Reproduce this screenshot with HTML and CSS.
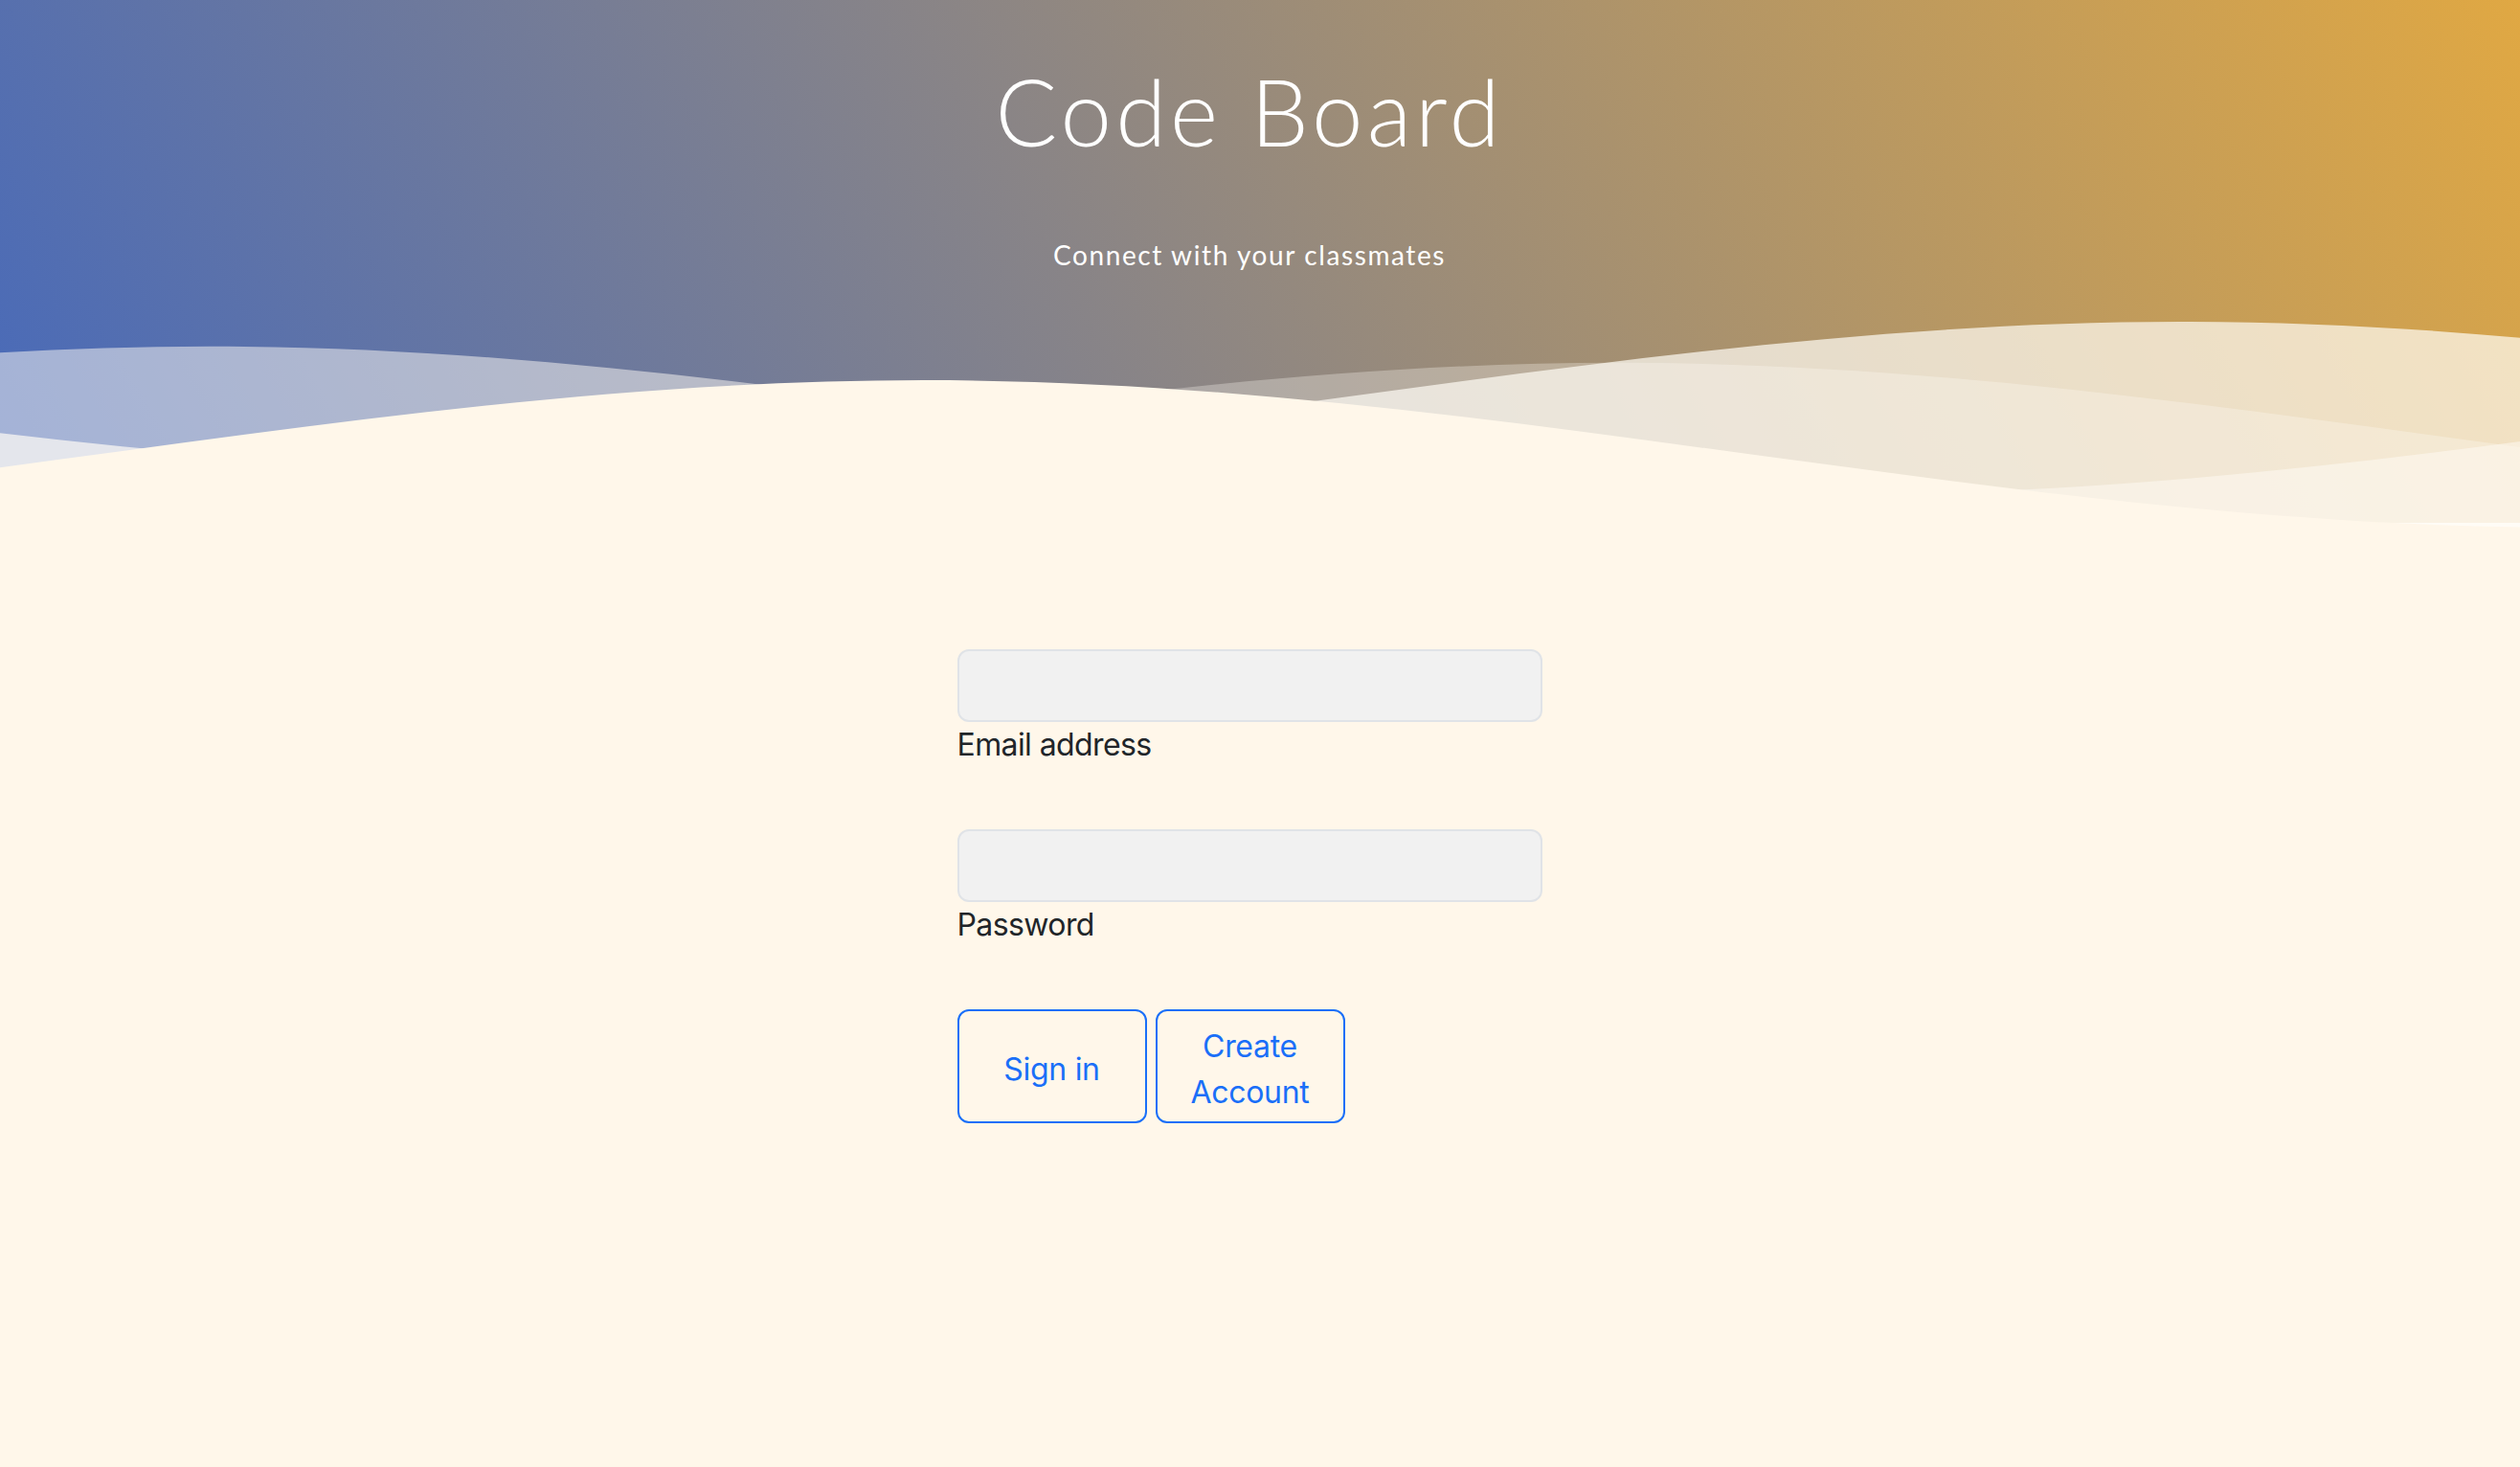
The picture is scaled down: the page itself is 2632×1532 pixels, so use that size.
FILE: index.html
```html
<!DOCTYPE html>
<html lang="en">
<head>
<meta charset="utf-8">
<title>Code Board</title>
<link rel="stylesheet" href="styles.css">
</head>
<body>
<header class="hero">
  <div class="hero-text">
    <h1 class="title">Code Board</h1>
    <p class="tagline">Connect with your classmates</p>
  </div>
  <svg class="waves" viewBox="0 0 2632 234" preserveAspectRatio="none" xmlns="http://www.w3.org/2000/svg">
    <defs>
      <path id="wave" d="M0 154 c586.4 0 1133.6 -154 1720 -154 s1133.6 154 1720 154 s1133.6 -154 1720 -154 s1133.6 154 1720 154 v300 h-6880 z"/>
    </defs>
    <rect x="0" y="227" width="2632" height="7" fill="#ffffff"/>
    <use href="#wave" transform="translate(-2883 17)" fill="rgba(255,252,245,0.7)"/>
    <use href="#wave" transform="translate(-1501 42.7)" fill="rgba(255,252,245,0.5)"/>
    <use href="#wave" transform="translate(-30 59.8)" fill="rgba(255,252,245,0.3)"/>
    <use href="#wave" transform="translate(-755 78)" fill="#fff7ea"/>
  </svg>
</header>
<main class="content">
  <form class="login">
    <div class="field">
      <input class="field-input" type="email" id="email">
      <label class="field-label" for="email">Email address</label>
    </div>
    <div class="field">
      <input class="field-input" type="password" id="password">
      <label class="field-label" for="password">Password</label>
    </div>
    <div class="actions">
      <button class="btn" type="button">Sign in</button>
      <button class="btn" type="button">Create Account</button>
    </div>
  </form>
</main>
</body>
</html>
```
FILE: styles.css
```css
html, body {
  margin: 0;
  padding: 0;
}

body {
  background: #fff7ea;
  font-family: Inter, "Liberation Sans", sans-serif;
}

.hero {
  background: linear-gradient(60deg, #4669bb 0%, #e0a843 100%);
}

.hero-text {
  box-sizing: border-box;
  height: 319px;
  padding: 58px 22px 0 0;
  text-align: center;
  color: #ffffff;
}

.title {
  margin: 0;
  font-family: Lato, "Open Sans", sans-serif;
  font-weight: 300;
  font-size: 96px;
  line-height: 1.2;
  letter-spacing: 4px;
}

.tagline {
  margin: 77px 0 0;
  font-family: Lato, "Open Sans", sans-serif;
  font-weight: 400;
  font-size: 28px;
  line-height: 1.2;
  letter-spacing: 1.6px;
}

.waves {
  display: block;
  width: 100%;
  height: 234px;
}

.content {
  box-sizing: border-box;
  min-height: 979px;
  padding: 125px 22px 0 0;
  display: flex;
  justify-content: center;
  background: #fff7ea;
}

.login {
  width: 611px;
}

.field {
  display: flex;
  flex-direction: column;
  margin-bottom: 64px;
}

.field-input {
  box-sizing: border-box;
  width: 100%;
  height: 76px;
  margin: 0;
  background: #f1f1f1;
  border: 2px solid #e0e3e7;
  border-radius: 12px;
  outline: none;
}

.field-label {
  font-size: 32px;
  line-height: 48px;
  letter-spacing: -0.6px;
  color: #212529;
}

.actions {
  display: flex;
  gap: 9px;
}

.btn {
  box-sizing: border-box;
  width: 198px;
  padding: 13px 22px 6px;
  background: transparent;
  border: 2px solid #1a6ff8;
  border-radius: 12px;
  color: #1a6ff8;
  font-family: Inter, "Liberation Sans", sans-serif;
  font-size: 32px;
  line-height: 48px;
  letter-spacing: -0.3px;
  text-align: center;
}
```
